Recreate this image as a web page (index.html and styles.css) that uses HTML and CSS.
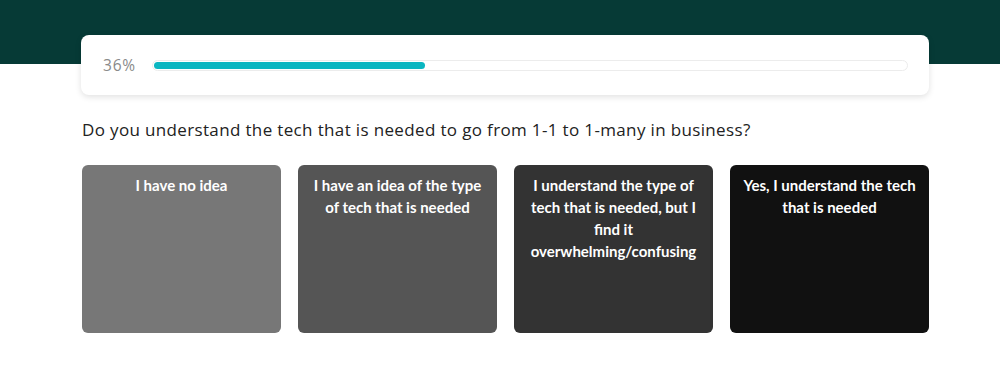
FILE: index.html
```html
<!DOCTYPE html>
<html lang="en">

<head>
  <meta charset="UTF-8">
  <meta name="viewport" content="width=device-width, initial-scale=1.0">
  <link rel="stylesheet" href="styles.css">
</head>

<body>
  <div class="band"></div>

  <div class="container">
    <div class="progress-card">
      <span class="percent">36%</span>
      <div class="track">
        <div class="fill" style="width: 36%;"></div>
      </div>
    </div>

    <p class="question">Do you understand the tech that is needed to go from 1-1 to 1-many in business?</p>

    <div class="answers">
      <div class="answer a1">I have no idea</div>
      <div class="answer a2">I have an idea of the type of tech that is needed</div>
      <div class="answer a3">I understand the type of tech that is needed, but I find it overwhelming/confusing</div>
      <div class="answer a4">Yes, I understand the tech that is needed</div>
    </div>
  </div>
</body>

</html>
```

FILE: styles.css
```css
* {
  margin: 0;
  padding: 0;
  box-sizing: border-box;
  font-family: Lato, "Open Sans", sans-serif;
}

body {
  background: #fff;
  position: relative;
}

.band {
  height: 64px;
  background: #063a36;
}

.container {
  width: 848px;
  margin-left: 81px;
  margin-top: -29px;
}

.progress-card {
  position: relative;
  display: flex;
  align-items: center;
  height: 60px;
  padding: 0 21px 0 22px;
  background: #fff;
  border-radius: 8px;
  box-shadow: 0 2px 6px rgba(0, 0, 0, 0.12);
}

.percent {
  font-family: "Open Sans", sans-serif;
  font-size: 15.5px;
  letter-spacing: 0.8px;
  color: #8a8a8a;
  width: 49px;
}

.track {
  flex: 1;
  height: 11px;
  border: 1px solid #ececec;
  border-radius: 6px;
  padding: 1px;
}

.fill {
  height: 100%;
  background: #0bb6c1;
  border-radius: 4px;
}

.question {
  margin-top: 24px;
  padding-left: 1px;
  font-family: "Open Sans", sans-serif;
  font-size: 17px;
  letter-spacing: 0.35px;
  color: #222;
  line-height: 22px;
}

.answers {
  display: flex;
  gap: 17px;
  margin-top: 24px;
  padding-left: 1px;
}

.answer {
  width: 199px;
  flex-shrink: 0;
  height: 168px;
  border-radius: 6px;
  padding: 9px 10px;
  color: #fff;
  text-align: center;
  font-size: 15px;
  font-weight: 700;
  line-height: 22px;
}

.a1 { background: #777; }
.a2 { background: #555; }
.a3 { background: #333; }
.a4 { background: #111; }
```
